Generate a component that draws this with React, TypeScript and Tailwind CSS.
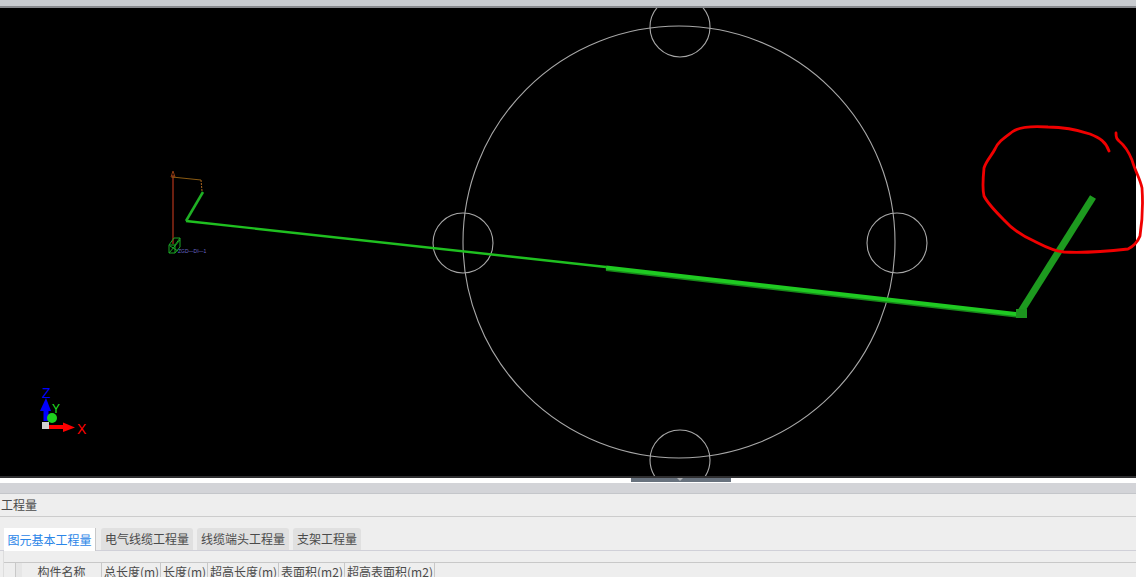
const tabs = ["电气线缆工程量", "线缆端头工程量", "支架工程量"];

const columns = [
  { label: "总长度(m)", width: "w-[59px]" },
  { label: "长度(m)", width: "w-[47px]" },
  { label: "超高长度(m)", width: "w-[71px]" },
  { label: "表面积(m2)", width: "w-[66px]" },
  { label: "超高表面积(m2)", width: "w-[90px]" },
];

const Scene = () => (
  <svg className="block h-[468px] w-[1144px] overflow-visible" viewBox="0 0 1144 468" fill="none">
    <defs>
      <clipPath id="canvas">
        <rect x="0" y="0" width="1136" height="468" />
      </clipPath>
    </defs>

    {/* 图纸 */}
    <g stroke="#a8a8a8" strokeWidth="1.1" clipPath="url(#canvas)">
      <circle cx="679" cy="234" r="216" />
      <circle cx="680" cy="19" r="30" />
      <circle cx="463" cy="235" r="30" />
      <circle cx="897" cy="235" r="30" />
      <circle cx="680" cy="452" r="30" />
    </g>

    {/* 管线 */}
    <path d="M186 213 L606 259" stroke="#1fc020" strokeWidth="2.4" />
    <path d="M606 261.5 L1020 308.5" stroke="#17881a" strokeWidth="3" />
    <path d="M606 259.5 L1020 306.5" stroke="#1fca22" strokeWidth="4" />
    <path d="M186 213 L203 184" stroke="#1fb024" strokeWidth="2.5" />
    <path d="M1020 305 L1093 189" stroke="#1d9a1f" strokeWidth="7" />
    <rect x="1016" y="301" width="11" height="9" fill="#1c941e" />

    {/* 小构件 */}
    <path d="M173 167 L173 236" stroke="#6b1f10" strokeWidth="2" />
    <path d="M171 169 L173 163 L175 169 Z" stroke="#8a3a12" strokeWidth="1" />
    <path d="M172 169 L201 172" stroke="#8a5a12" strokeWidth="1" />
    <path d="M201 172 L202 183" stroke="#b06a20" strokeWidth="1" strokeDasharray="2 1" />
    <g stroke="#1aa524" strokeWidth="1">
      <path d="M169 237 L174 230 L180 230 L180 239 L175 245 L169 245 Z" />
      <path d="M169 237 L175 237 L180 230 M175 237 L175 245 M169 245 L180 232 M170 238 L178 243" />
    </g>
    <text x="178" y="245" fill="#6a66c8" fontSize="5" fontFamily="Liberation Sans, sans-serif">
      ZGD—DI—1
    </text>

    {/* 坐标轴 */}
    <path d="M46 413 L46 402" stroke="#0000ff" strokeWidth="5" />
    <path d="M40 403 L46 390 L51 403 Z" fill="#0000ff" />
    <circle cx="52" cy="410" r="5" fill="#1fd01f" />
    <path d="M49 419 L64 419" stroke="#ff0000" strokeWidth="4" />
    <path d="M63 414.5 L75 419.5 L63 424 Z" fill="#ff0000" />
    <rect x="42" y="414" width="7" height="7" fill="#d0d0d0" />
    <text x="42" y="390" fill="#0000ff" fontSize="14" fontFamily="Liberation Sans, sans-serif">Z</text>
    <text x="52" y="405" fill="#22e022" fontSize="12" fontFamily="Liberation Sans, sans-serif">Y</text>
    <text x="77" y="426" fill="#ff0000" fontSize="14" fontFamily="Liberation Sans, sans-serif">X</text>

    {/* 手绘圈 */}
    <path
      d="M1109 143 C1106 134 1100 130 1090 126 C1078 122 1062 119 1048 119 C1034 118 1020 118 1012 124 C1004 130 998 134 995 141 C992 147 986 153 984 160 C983 170 982 180 984 188 C988 196 996 204 1004 212 C1012 221 1020 227 1034 233 C1042 237 1052 243 1064 244 C1082 245 1110 243 1128 241 C1134 238 1138 233 1140 228 C1142 215 1143 195 1142 180 C1140 170 1135 163 1132 152 C1128 142 1124 137 1119 133 C1117 131 1116 130 1116 125"
      stroke="#f00000"
      strokeWidth="2.8"
      strokeLinecap="round"
    />
  </svg>
);

export default function App() {
  return (
    <div className="h-[577px] w-[1144px] overflow-hidden bg-white font-['Noto_Sans_CJK_SC','Liberation_Sans',sans-serif] text-xs text-[#4a4a4a]">
      <div className="flex h-full w-[1136px] flex-col bg-[#eeeeee]">
        <div className="h-[6px] shrink-0 bg-[#c8cbcf]" />
        <div className="h-[2px] shrink-0 bg-[#86888c]" />
        <div className="h-[468px] shrink-0 bg-black">
          <Scene />
        </div>
        <div className="h-[2px] shrink-0 bg-[#2e2e30]" />

        {/* 分隔条 */}
        <div className="h-[5px] shrink-0 bg-white pl-[631px]">
          <div className="relative h-[4px] w-[100px] bg-[#68727e]">
            <div className="absolute left-[46px] top-0 h-0 w-0 border-x-[3px] border-t-[3px] border-x-transparent border-t-[#b0b4b8]" />
          </div>
        </div>
        <div className="h-[11px] shrink-0 border-b border-[#c4c6ca] bg-[#d3d4d8]" />

        <div className="flex h-[23px] shrink-0 items-center border-b border-[#cccccc] pl-[1px] text-[12px] leading-none">
          工程量
        </div>

        {/* 页签 */}
        <div className="flex h-[34px] shrink-0 items-end gap-[4px] border-b border-[#d0d0d8] pl-[4px]">
          <div className="z-10 mb-[-1px] mr-[1px] flex h-[23px] w-[92px] items-center justify-center border-r border-[#c8c8c8] bg-white text-[12px] leading-none text-[#2b86e8]">
            图元基本工程量
          </div>
          {tabs.map((tab) => (
            <div
              key={tab}
              className="flex h-[22px] items-center justify-center rounded-t-[3px] bg-[#e0e0e0] px-[4px] text-[12px] leading-none"
            >
              {tab}
            </div>
          ))}
        </div>

        {/* 表头 */}
        <div className="ml-[3px] flex-1 border-l border-[#dddddd] pt-[11px]">
          <div className="h-[20px] border-t border-[#c8c8c8] pl-[11px]">
            <div className="flex h-full w-[420px] border-l border-[#c8c8c8] leading-none">
              <div className="flex w-[86px] items-start border-r border-[#c8c8c8] pt-[3px]">
                <div className="mt-[-3px] h-[20px] w-[6px] bg-[#e6e6e6]" />
                <div className="flex-1 px-[1px] text-center">构件名称</div>
              </div>
              {columns.map((col) => (
                <div
                  key={col.label}
                  className={`${col.width} whitespace-nowrap border-r border-[#c8c8c8] pl-[1px] pt-[3px] text-center`}
                >
                  {col.label}
                </div>
              ))}
            </div>
          </div>
        </div>
      </div>
    </div>
  );
}
